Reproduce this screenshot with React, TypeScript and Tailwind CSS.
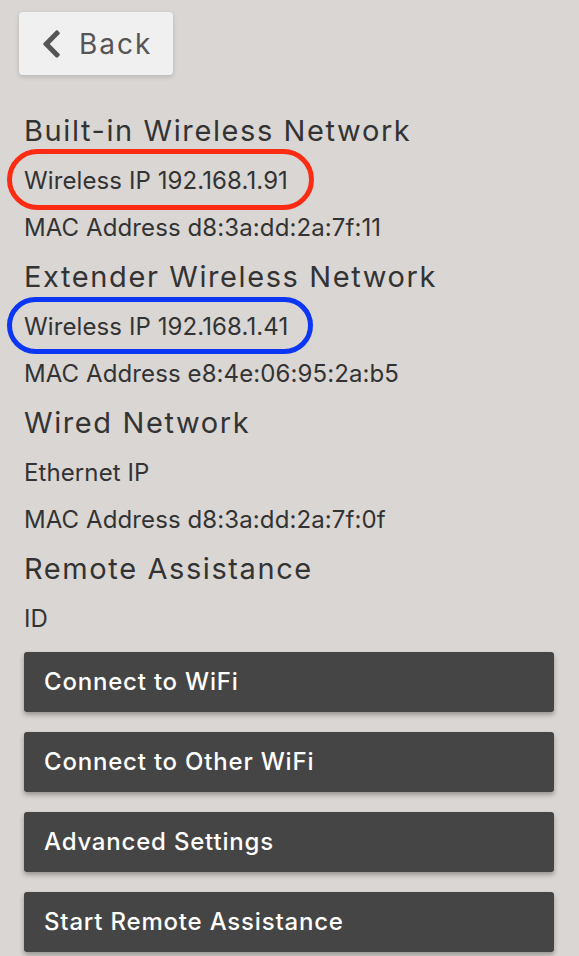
import React from "react";
import { FaChevronLeft } from "react-icons/fa";

function Heading({ children }: { children: React.ReactNode }) {
  return (
    <div className="h-[52px] text-[29px] leading-[52px] tracking-[1.6px] text-[#333333] whitespace-nowrap">
      {children}
    </div>
  );
}

function Line({ children, ring }: { children: React.ReactNode; ring?: "red" | "blue" }) {
  return (
    <div className="relative h-[47px] text-[24px] leading-[47px] tracking-[0.1px] text-[#333333] whitespace-nowrap">
      {ring === "red" && (
        <div className="absolute left-[-17px] top-[-8px] h-[61px] w-[307px] rounded-full border-[5px] border-[#fb2b14]" />
      )}
      {ring === "blue" && (
        <div className="absolute left-[-17px] top-[-6px] h-[57px] w-[306px] rounded-full border-[5px] border-[#0b36f4]" />
      )}
      <span className="relative">{children}</span>
    </div>
  );
}

function ActionButton({ children }: { children: React.ReactNode }) {
  return (
    <button className="flex h-[60px] w-full items-center rounded-[3px] bg-[#454545] px-5 text-left text-[24px] font-medium tracking-[0.8px] text-white shadow-[0_3px_5px_rgba(0,0,0,0.3)]">
      {children}
    </button>
  );
}

export default function App() {
  return (
    <div
      className="min-h-[956px] w-full bg-[#d9d6d3] pb-4"
      style={{ fontFamily: "Inter, 'Open Sans', sans-serif" }}
    >
      <div className="pl-[19px] pt-[12px]">
        <button className="flex h-[63px] w-[154px] items-center gap-[17px] rounded-[4px] bg-[#f0f0f0] pl-[22px] text-[28px] tracking-[2px] text-[#555555] shadow-[0_2px_5px_rgba(0,0,0,0.15)]">
          <FaChevronLeft className="h-[32px] w-[21px]" />
          <span>Back</span>
        </button>
      </div>
      <div className="mt-[30px] px-[24px]">
        <Heading>Built-in Wireless Network</Heading>
        <Line ring="red">Wireless IP 192.168.1.91</Line>
        <Line>MAC Address d8:3a:dd:2a:7f:11</Line>
        <Heading>Extender Wireless Network</Heading>
        <Line ring="blue">Wireless IP 192.168.1.41</Line>
        <Line>MAC Address e8:4e:06:95:2a:b5</Line>
        <Heading>Wired Network</Heading>
        <Line>Ethernet IP</Line>
        <Line>MAC Address d8:3a:dd:2a:7f:0f</Line>
        <Heading>Remote Assistance</Heading>
        <Line>ID</Line>
        <div className="mt-[10px] flex w-[530px] flex-col gap-5">
          <ActionButton>Connect to WiFi</ActionButton>
          <ActionButton>Connect to Other WiFi</ActionButton>
          <ActionButton>Advanced Settings</ActionButton>
          <ActionButton>Start Remote Assistance</ActionButton>
        </div>
      </div>
    </div>
  );
}
